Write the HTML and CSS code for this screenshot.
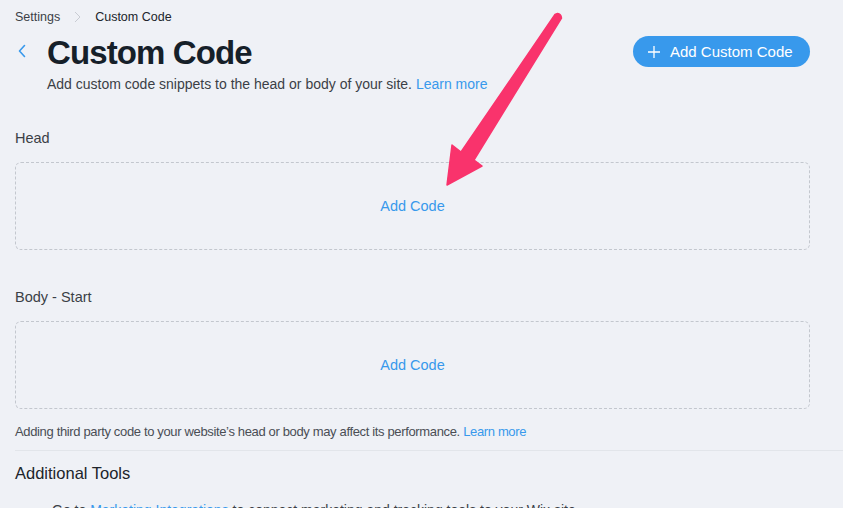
FILE: index.html
```html
<!DOCTYPE html>
<html>
<head>
<meta charset="utf-8">
<link rel="stylesheet" href="styles.css">
</head>
<body>
<div class="page">
  <nav class="crumbs">
    <span class="crumb">Settings</span>
    <svg class="crumb-sep" width="7" height="12" viewBox="0 0 7 12"><path d="M1 1 L6 6 L1 11" fill="none" stroke="#c9ccd3" stroke-width="1"/></svg>
    <span class="crumb current">Custom Code</span>
  </nav>

  <header class="header">
    <svg class="back" width="10" height="14" viewBox="0 0 10 14"><path d="M7.5 1.5 L2.5 7 L7.5 12.5" fill="none" stroke="#3899ec" stroke-width="1.6" stroke-linecap="round" stroke-linejoin="round"/></svg>
    <div class="titles">
      <h1 class="title">Custom Code</h1>
      <p class="subtitle">Add custom code snippets to the head or body of your site. <a class="link">Learn more</a></p>
    </div>
    <button class="add-btn">
      <svg width="14" height="14" viewBox="0 0 14 14"><path d="M7 1 V13 M1 7 H13" stroke="#fff" stroke-width="1.3"/></svg>
      <span>Add Custom Code</span>
    </button>
  </header>

  <section class="slot">
    <h2 class="slot-label">Head</h2>
    <div class="dropzone"><a class="link add-code">Add Code</a></div>
  </section>

  <section class="slot second">
    <h2 class="slot-label">Body - Start</h2>
    <div class="dropzone"><a class="link add-code">Add Code</a></div>
  </section>

  <p class="note">Adding third party code to your website’s head or body may affect its performance. <a class="link">Learn more</a></p>
  <div class="divider"></div>

  <h3 class="tools-title">Additional Tools</h3>
  <ul class="tools">
    <li>Go to <a class="link">Marketing Integrations</a> to connect marketing and tracking tools to your Wix site.</li>
  </ul>
</div>

<svg class="arrow" width="843" height="508" viewBox="0 0 843 508">
  <path d="M557.5 13.5 Q561 14 561.5 18 L474 160 L482 166 L447 185 L452 145 L461 152 L555 14.5 Z" fill="#f9336c" stroke="#f9336c" stroke-width="1.5" stroke-linejoin="round"/>
</svg>
</body>
</html>
```

FILE: styles.css
```css
html, body {
  margin: 0;
  padding: 0;
  background: #eff1f6;
  font-family: "Liberation Sans", Arial, sans-serif;
  color: #32363d;
  overflow: hidden;
}

.page {
  padding: 0 33px 0 15px;
}

.link {
  color: #3899ec;
  text-decoration: none;
  cursor: pointer;
}

.crumbs {
  height: 33px;
  display: flex;
  align-items: center;
  font-size: 12.5px;
  gap: 14px;
}

.crumb {
  color: #3b3f46;
}

.crumb.current {
  color: #20242b;
}

.header {
  display: flex;
  align-items: flex-start;
  margin-top: -1px;
}

.back {
  margin: 12px 0 0 2px;
  width: 10px;
  flex: none;
}

.titles {
  flex: 1;
  margin-left: 20px;
}

.title {
  margin: 2px 0 0;
  font-size: 33px;
  line-height: 38px;
  font-weight: 700;
  letter-spacing: -0.9px;
  color: #162029;
}

.subtitle {
  margin: 3px 0 0;
  font-size: 14px;
  line-height: 18px;
  color: #3b3f46;
}

.add-btn {
  margin-top: 4px;
  height: 31px;
  width: 177px;
  border: none;
  border-radius: 16px;
  background: #3899ec;
  color: #fff;
  display: flex;
  align-items: center;
  padding: 0 0 0 14px;
  font-family: inherit;
  font-size: 15px;
  gap: 9px;
}

.slot {
  margin-top: 36px;
}

.slot.second {
  margin-top: 38px;
}

.slot-label {
  margin: 0;
  font-size: 14.5px;
  font-weight: 400;
  line-height: 18px;
  color: #3b3f46;
}

.dropzone {
  margin-top: 15px;
  height: 86px;
  border: 1px dashed #c3c7ce;
  border-radius: 6px;
  display: flex;
  align-items: center;
  justify-content: center;
}

.add-code {
  font-size: 14.5px;
}

.note {
  margin: 15px 0 0;
  font-size: 13px;
  letter-spacing: -0.35px;
  line-height: 16px;
  color: #4a4e55;
}

.divider {
  margin: 10px -33px 0 0;
  height: 1px;
  background: #e2e5ea;
}

.tools-title {
  margin: 12px 0 0;
  font-size: 16.5px;
  font-weight: 400;
  line-height: 20px;
  color: #20242b;
}

.tools {
  margin: 18px 0 0;
  padding-left: 37px;
  font-size: 14px;
  line-height: 18px;
  color: #3b3f46;
}

.arrow {
  position: absolute;
  left: 0;
  top: 0;
  pointer-events: none;
}
```
